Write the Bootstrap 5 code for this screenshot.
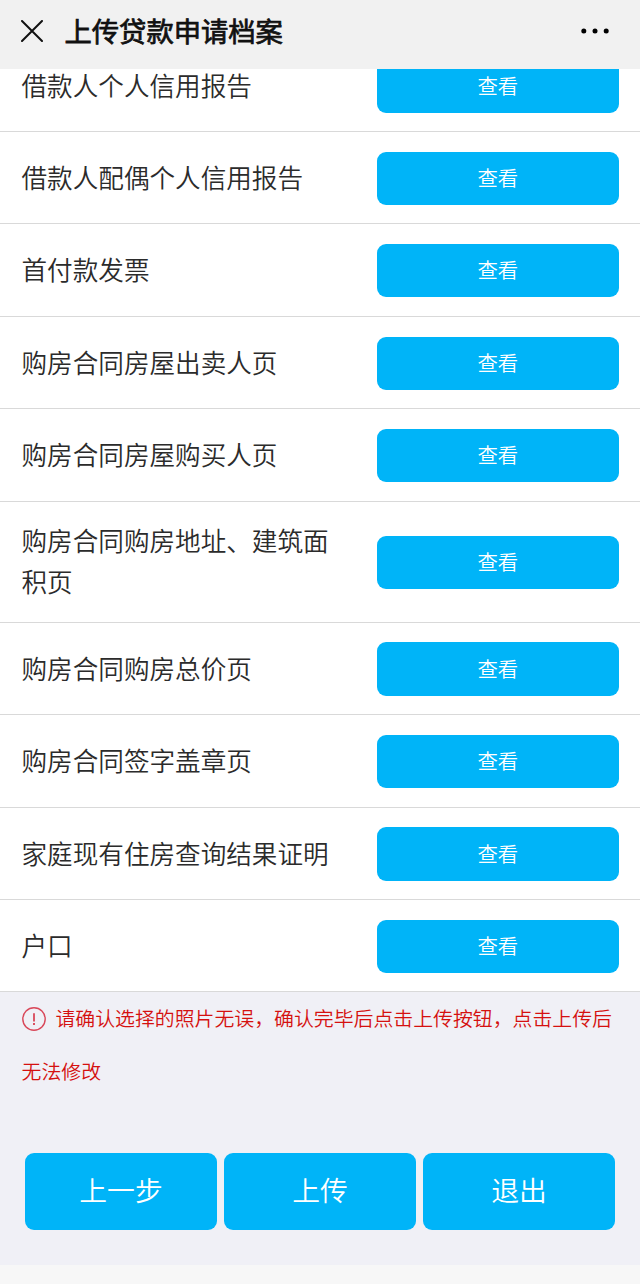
<!DOCTYPE html>
<html lang="zh-CN">
<head>
<meta charset="utf-8">
<meta name="viewport" content="width=device-width, initial-scale=1">
<title>上传贷款申请档案</title>
<link href="https://cdn.jsdelivr.net/npm/bootstrap@5.3.0/dist/css/bootstrap.min.css" rel="stylesheet">
<style>
body { font-family: "Noto Sans CJK SC", sans-serif; font-weight: 350; background: #f7f7f7; color: #2b2b2b; height: 1284px; overflow: hidden; }
.topbar { height: 69px; background: #f1f1f1; padding: 0 31px 7px 21px; color: #111; }
.topbar h1 { font-size: 27.3px; line-height: 40px; font-weight: 400; -webkit-text-stroke: .75px #111; margin: 0 0 3px 21.5px; }
.page-body { height: 1196px; background: #f0f0f6; }
.doc-row { height: 92.45px; padding: 1.4px 21.3px 0 21.5px; background: #fff; border: 0; border-bottom: 1px solid #d9d9d9; font-size: 25.6px; line-height: 40.96px; color: #2b2b2b; }
.doc-row.two-line { height: 121px; }
.doc-name { width: 310px; padding-bottom: 2px; }
.btn-sky, .btn-sky:hover { background: #00b4f8; color: #fff; border: 0; border-radius: 9px; padding: 0 0 2px; font-weight: 350; }
.btn-view { width: 241.7px; height: 53.4px; font-size: 20.4px; }
/* row scrolled partly under the title bar */
.doc-row.scrolled { height: 62.95px; padding-top: 0; line-height: 30px; }
.scrolled .doc-name { padding: 1px 0 0; }
.scrolled .btn-view { height: 43.6px; padding-bottom: 11px; border-radius: 0 0 9px 9px; }
.notice { padding: 0 20px 0 21.5px; margin-top: -1px; font-size: 19.89px; line-height: 53px; color: #d5100f; height: 161.2px; }
.notice svg { margin: -5px 9.9px 0 0; }
.actions { padding: 0 25px; gap: 7px; }
.btn-step { height: 77px; font-size: 27.8px; }
</style>
</head>
<body>
<header class="topbar d-flex align-items-center">
  <svg width="22" height="22" viewBox="0 0 22 22" stroke="#111" stroke-width="2" stroke-linecap="round"><path d="M1 1 21 21M21 1 1 21"/></svg>
  <h1>上传贷款申请档案</h1>
  <svg class="ms-auto" width="28" height="6" viewBox="0 0 28 6" fill="#000"><circle cx="2.8" cy="3" r="2.5"/><circle cx="14" cy="3" r="2.5"/><circle cx="25.2" cy="3" r="2.5"/></svg>
</header>
<main class="page-body">
  <div class="doc-list">
    <div class="doc-row scrolled d-flex align-items-start justify-content-between"><div class="doc-name">借款人个人信用报告</div><button class="btn btn-sky btn-view">查看</button></div>
    <div class="doc-row d-flex align-items-center justify-content-between"><div class="doc-name">借款人配偶个人信用报告</div><button class="btn btn-sky btn-view">查看</button></div>
    <div class="doc-row d-flex align-items-center justify-content-between"><div class="doc-name">首付款发票</div><button class="btn btn-sky btn-view">查看</button></div>
    <div class="doc-row d-flex align-items-center justify-content-between"><div class="doc-name">购房合同房屋出卖人页</div><button class="btn btn-sky btn-view">查看</button></div>
    <div class="doc-row d-flex align-items-center justify-content-between"><div class="doc-name">购房合同房屋购买人页</div><button class="btn btn-sky btn-view">查看</button></div>
    <div class="doc-row two-line d-flex align-items-center justify-content-between"><div class="doc-name">购房合同购房地址、建筑面积页</div><button class="btn btn-sky btn-view">查看</button></div>
    <div class="doc-row d-flex align-items-center justify-content-between"><div class="doc-name">购房合同购房总价页</div><button class="btn btn-sky btn-view">查看</button></div>
    <div class="doc-row d-flex align-items-center justify-content-between"><div class="doc-name">购房合同签字盖章页</div><button class="btn btn-sky btn-view">查看</button></div>
    <div class="doc-row d-flex align-items-center justify-content-between"><div class="doc-name">家庭现有住房查询结果证明</div><button class="btn btn-sky btn-view">查看</button></div>
    <div class="doc-row d-flex align-items-center justify-content-between"><div class="doc-name">户口</div><button class="btn btn-sky btn-view">查看</button></div>
  </div>
  <p class="notice mb-0"><svg width="24" height="24" viewBox="0 0 24 24" fill="none" stroke="#d9485a"><circle cx="12" cy="12" r="11.2" stroke-width="1.4"/><path d="M12 6.2V14.5" stroke-width="1.8"/><path d="M12 16v2" stroke-width="1.9"/></svg>请确认选择的照片无误，确认完毕后点击上传按钮，点击上传后无法修改</p>
  <div class="actions d-flex">
    <button class="btn btn-sky btn-step flex-fill w-100">上一步</button>
    <button class="btn btn-sky btn-step flex-fill w-100">上传</button>
    <button class="btn btn-sky btn-step flex-fill w-100">退出</button>
  </div>
</main>
<script src="https://cdn.jsdelivr.net/npm/bootstrap@5.3.0/dist/js/bootstrap.bundle.min.js"></script>
</body>
</html>
